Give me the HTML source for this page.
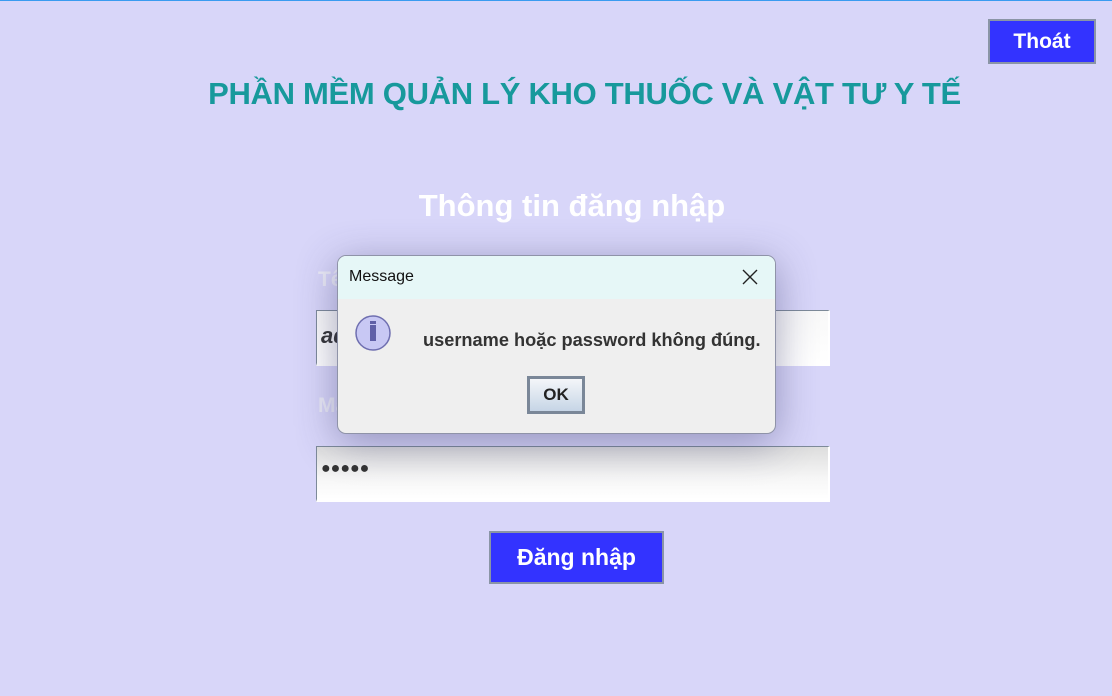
<!DOCTYPE html>
<html><head><meta charset="utf-8"><style>
body{margin:0;width:1112px;height:696px;background:#d8d6f9;position:relative;overflow:hidden;font-family:"Liberation Sans",sans-serif}
.abs{position:absolute}
.top{left:0;top:0;width:1112px;height:1px;background:#3a9bf0}
.btn{background:#3333ff;border:2px solid #8a95a6;color:#fff;font-weight:bold;display:flex;align-items:center;justify-content:center;box-sizing:border-box}
.field{left:316px;width:514px;height:56px;box-sizing:border-box;border:1px solid #7d8a99;border-right:2px solid #fff;border-bottom:3px solid #fff;background:linear-gradient(#f8f8f8,#fff)}
.lbl{color:#ebebf7;font-weight:bold;font-size:21px}
</style></head><body>
<div class="abs top"></div>
<div class="abs btn" style="left:988px;top:19px;width:108px;height:45px;font-size:21px">Thoát</div>
<div class="abs" style="left:0;width:1169px;top:76px;text-align:center;color:#17999c;font-weight:bold;font-size:31px;letter-spacing:-0.3px">PHẦN MỀM QUẢN LÝ KHO THUỐC VÀ VẬT TƯ Y TẾ</div>
<div class="abs" style="left:0;width:1144px;top:188px;text-align:center;color:#fff;font-weight:bold;font-size:31px">Thông tin đăng nhập</div>
<div class="abs lbl" style="left:318px;top:268px">Tên</div>
<div class="abs field" style="top:310px"><span style="position:absolute;left:4px;top:12px;font-size:22px;font-weight:bold;font-style:italic;color:#333">ad</span></div>
<div class="abs lbl" style="left:318px;top:394px">Mật khẩu</div>
<div class="abs field" style="top:446px;background:linear-gradient(#ddd,#f6f6f6 60%,#fff)"><span style="position:absolute;left:4px;top:13px;font-size:16px;color:#333;letter-spacing:0px">●●●●●</span></div>
<div class="abs btn" style="left:489px;top:531px;width:175px;height:53px;font-size:23px">Đăng nhập</div>
<div class="abs" style="left:337px;top:255px;width:439px;height:179px;border:1px solid #8f93a8;border-radius:9px;background:#efefef;box-shadow:0 8px 40px rgba(60,60,110,.45);overflow:hidden;box-sizing:border-box">
 <div style="height:43px;background:#e6f7f7;position:relative">
  <span style="position:absolute;left:11px;top:12px;font-size:16px;color:#111">Message</span>
  <svg style="position:absolute;left:404px;top:13px" width="16" height="16"><path d="M1 1L15 15M15 1L1 15" stroke="#222" stroke-width="1.4"/></svg>
 </div>
 <svg style="position:absolute;left:16px;top:58px" width="40" height="40"><circle cx="19" cy="19" r="17" fill="#c8c8f4" stroke="#6f6fb0" stroke-width="1.5"/><rect x="16" y="11" width="6" height="16" fill="#6060a8"/><rect x="16" y="7" width="6" height="3" fill="#6060a8"/></svg>
 <div style="position:absolute;left:85px;top:74px;font-size:18.2px;font-weight:bold;color:#333">username hoặc password không đúng.</div>
 <div style="position:absolute;left:189px;top:120px;width:58px;height:38px;box-sizing:border-box;border:3px solid #7a8798;background:linear-gradient(#f4f6f9,#c6d5e6);display:flex;align-items:center;justify-content:center;font-weight:bold;font-size:17px;color:#222">OK</div>
</div>
</body></html>
